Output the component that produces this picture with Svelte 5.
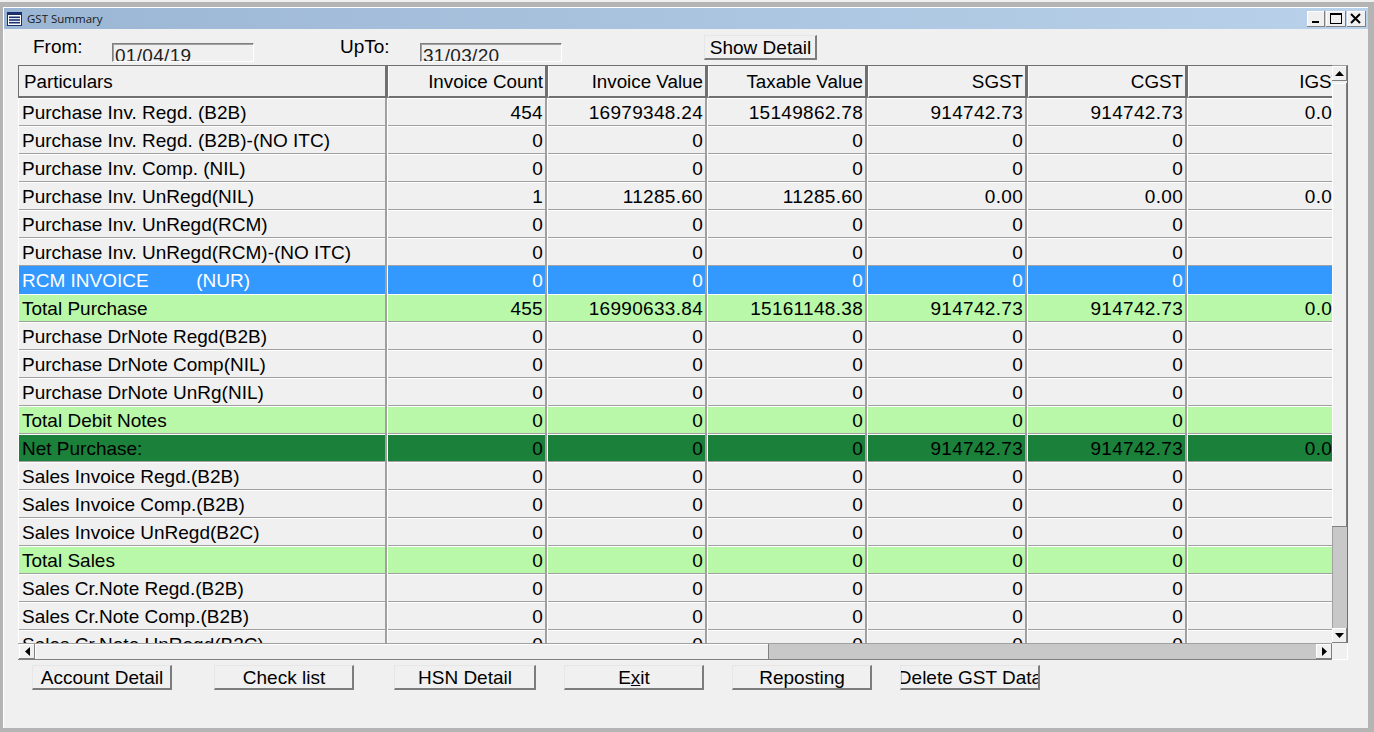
<script>
  const headers = ['Invoice Count', 'Invoice Value', 'Taxable Value', 'SGST', 'CGST', 'IGST'];
  const z = ['0', '0', '0', '0', '0', ''];
  const rows = [
    { name: 'Purchase Inv. Regd. (B2B)', v: ['454', '16979348.24', '15149862.78', '914742.73', '914742.73', '0.00'] },
    { name: 'Purchase Inv. Regd. (B2B)-(NO ITC)', v: z },
    { name: 'Purchase Inv. Comp. (NIL)', v: z },
    { name: 'Purchase Inv. UnRegd(NIL)', v: ['1', '11285.60', '11285.60', '0.00', '0.00', '0.00'] },
    { name: 'Purchase Inv. UnRegd(RCM)', v: z },
    { name: 'Purchase Inv. UnRegd(RCM)-(NO ITC)', v: z },
    { name: 'RCM INVOICE         (NUR)', v: z, kind: 'sel' },
    { name: 'Total Purchase', v: ['455', '16990633.84', '15161148.38', '914742.73', '914742.73', '0.00'], kind: 'total' },
    { name: 'Purchase DrNote Regd(B2B)', v: z },
    { name: 'Purchase DrNote Comp(NIL)', v: z },
    { name: 'Purchase DrNote UnRg(NIL)', v: z },
    { name: 'Total Debit Notes', v: z, kind: 'total' },
    { name: 'Net Purchase:', v: ['0', '0', '0', '914742.73', '914742.73', '0.00'], kind: 'net' },
    { name: 'Sales Invoice Regd.(B2B)', v: z },
    { name: 'Sales Invoice Comp.(B2B)', v: z },
    { name: 'Sales Invoice UnRegd(B2C)', v: z },
    { name: 'Total Sales', v: z, kind: 'total' },
    { name: 'Sales Cr.Note Regd.(B2B)', v: z },
    { name: 'Sales Cr.Note Comp.(B2B)', v: z },
    { name: 'Sales Cr.Note UnRegd(B2C)', v: z }
  ];
</script>

<div class="shell">
  <div class="window">
    <header class="title">
      <svg class="appicon" width="15" height="14" viewBox="0 0 15 14">
        <rect x="0.5" y="0.5" width="14" height="13" fill="#fff" stroke="#1c2f6e" />
        <rect x="0" y="0" width="15" height="3" fill="#1c2f6e" />
        <rect x="2" y="4.5" width="11" height="1.6" fill="#1c2f6e" />
        <rect x="2" y="7.2" width="11" height="1.6" fill="#1c2f6e" />
        <rect x="2" y="9.9" width="11" height="1.6" fill="#1c2f6e" />
      </svg>
      <span class="title-text">GST Summary</span>
      <div class="controls">
        <button class="ctl" aria-label="Minimize">
          <svg width="18" height="16" viewBox="0 0 18 16"><rect x="5" y="10" width="7" height="2" fill="#000" /></svg>
        </button>
        <button class="ctl wide" aria-label="Maximize">
          <svg width="18" height="16" viewBox="0 0 18 16"><rect x="3.5" y="2.5" width="11" height="10" fill="none" stroke="#000" /><rect x="3" y="2" width="12" height="2" fill="#000" /></svg>
        </button>
        <button class="ctl" aria-label="Close">
          <svg width="18" height="16" viewBox="0 0 18 16"><path d="M4 3 L13 12 M13 3 L4 12" stroke="#000" stroke-width="2" fill="none" /></svg>
        </button>
      </div>
    </header>

    <div class="toolbar">
      <span class="label from">From:</span>
      <div class="field first">01/04/19</div>
      <span class="label upto">UpTo:</span>
      <div class="field second">31/03/20</div>
      <button class="btn show">Show Detail</button>
    </div>

    <div class="gridwrap">
      <div class="viewport">
        <div class="hrow">
          <div class="hcell first-col">Particulars</div>
          {#each headers as h}
            <div class="hcell num">{h}</div>
          {/each}
        </div>
        {#each rows as r}
          <div class="row {r.kind ?? ''}">
            <div class="cell first-col"><span class="fill">{r.name}</span></div>
            {#each r.v as val}
              <div class="cell num"><span class="fill">{val}</span></div>
            {/each}
          </div>
        {/each}
      </div>

      <div class="vbar">
        <div class="sbtn"><svg width="9" height="5" viewBox="0 0 9 5"><path d="M4.5 0 L9 5 L0 5 Z" fill="#000" /></svg></div>
        <div class="vthumb"></div>
        <div class="vtrack"></div>
        <div class="sbtn"><svg width="9" height="5" viewBox="0 0 9 5"><path d="M0 0 L9 0 L4.5 5 Z" fill="#000" /></svg></div>
      </div>

      <div class="hbar">
        <div class="sbtn h"><svg width="5" height="9" viewBox="0 0 5 9"><path d="M5 0 L5 9 L0 4.5 Z" fill="#000" /></svg></div>
        <div class="hthumb"></div>
        <div class="htrack"></div>
        <div class="sbtn h"><svg width="5" height="9" viewBox="0 0 5 9"><path d="M0 0 L5 4.5 L0 9 Z" fill="#000" /></svg></div>
      </div>

      <div class="corner"></div>
    </div>

    <div class="actions">
      <button class="btn act">Account Detail</button>
      <button class="btn act g42">Check list</button>
      <button class="btn act g40 hsn">HSN Detail</button>
      <button class="btn act g28"><span>E<u>x</u>it</span></button>
      <button class="btn act g28">Reposting</button>
      <button class="btn act g28">Delete GST Data</button>
    </div>
  </div>
</div>

<style>
  :global(body) {
    margin: 0;
    background: #b4b4b4;
    font-family: "Liberation Sans", Arial, sans-serif;
  }
  .shell {
    width: 1374px;
    height: 732px;
    box-sizing: border-box;
    border-top: 2px solid #f0f0f0;
    padding: 5px 6px 4px 3px;
    overflow: hidden;
  }
  .window {
    height: 100%;
    box-sizing: border-box;
    background: #f0f0f0;
    border-top: 1px solid #fff;
    border-left: 1px solid #fff;
    display: flex;
    flex-direction: column;
    font-size: 19px;
    color: #000;
  }
  .title {
    height: 21px;
    flex: none;
    display: flex;
    align-items: center;
    padding-left: 3px;
    background: linear-gradient(to right, #9bb6d4, #b9d1ea);
  }
  .appicon { flex: none; }
  .title-text {
    margin-left: 5px;
    font-family: "Open Sans", sans-serif;
    font-size: 11.5px;
    color: #1a1a1a;
  }
  .controls {
    margin-left: auto;
    display: flex;
    gap: 1px;
    margin-right: 2px;
  }
  .ctl {
    width: 18px;
    height: 16px;
    padding: 0;
    border: none;
    background: #f0f0f0;
    box-shadow: inset -1px -1px 0 #808080, inset 1px 1px 0 #fff;
    display: flex;
  }
  .ctl.wide { width: 20px; justify-content: center; }
  .ctl:last-child { width: 19px; }

  .toolbar {
    height: 36px;
    flex: none;
    display: flex;
    align-items: flex-start;
  }
  .label { line-height: 20px; margin-top: 8px; }
  .from { margin-left: 29px; width: 79px; }
  .upto { margin-left: 86px; width: 80px; }
  .field {
    width: 142px;
    height: 19px;
    box-sizing: border-box;
    margin-top: 14px;
    padding-left: 2px;
    border-style: solid;
    border-width: 1px;
    border-color: #808080 #fff #fff #808080;
    box-shadow: inset 1px 1px 0 #a0a0a0;
    line-height: 23px;
    overflow: hidden;
    white-space: nowrap;
    color: #222;
    letter-spacing: 0.3px;
  }
  .btn {
    padding: 1px 0 0 1px;
    font: inherit;
    color: #000;
    background: #f0f0f0;
    border-style: solid;
    border-width: 1px 2px 2px 1px;
    border-color: #e6e6e6 #7c7c7c #7c7c7c #e6e6e6;
    overflow: hidden;
    white-space: nowrap;
    display: flex;
    align-items: center;
    justify-content: center;
  }
  .show {
    width: 113px;
    height: 25px;
    margin-left: 142px;
    margin-top: 6px;
  }

  .gridwrap {
    flex: none;
    margin-left: 14px;
    width: 1330px;
    display: grid;
    grid-template-columns: 1314px 16px;
    grid-template-rows: 578px 17px;
  }
  .viewport { overflow: hidden; background: #f0f0f0; }
  .hrow {
    display: flex;
    height: 33px;
    box-sizing: border-box;
    background: #f0f0f0;
    border-top: 1px solid #707070;
  }
  .hcell {
    flex: none;
    width: 160px;
    box-sizing: border-box;
    height: 32px;
    border-left: 1px solid #fff;
    border-right: 3px solid #707070;
    border-bottom: 2px solid #707070;
    box-shadow: 0 1px 0 #fff;
    font-size: 18.8px;
    line-height: 31px;
    white-space: nowrap;
    padding-right: 2px;
  }
  .hcell.first-col {
    width: 370px;
    border-left: 1px solid #707070;
    padding-left: 5px;
  }
  .num { text-align: right; }
  .row { display: flex; height: 28px; }
  .cell {
    flex: none;
    width: 160px;
    height: 28px;
    box-sizing: border-box;
    border-left: 1px solid #fff;
    border-right: 2px solid #a0a0a0;
    white-space: pre;
  }
  .cell.first-col { width: 369px; }
  .fill {
    display: block;
    box-sizing: border-box;
    height: 28px;
    line-height: 27px;
    border-top: 1px solid #fff;
    border-bottom: 1px solid #a0a0a0;
    padding-right: 2px;
  }
  .num .fill { letter-spacing: 0.3px; }
  .first-col .fill { padding-left: 3px; }
  .sel .fill {
    background: #3399ff;
    color: #fff;
    border-color: #3399ff;
  }
  .total .fill { background: #b8f8a8; }
  .net .fill { background: #1a803a; }

  .vbar {
    display: flex;
    flex-direction: column;
    border-right: 1px solid #707070;
    border-top: 1px solid #a0a0a0;
    box-sizing: border-box;
    background: #f0f0f0;
  }
  .sbtn {
    flex: none;
    height: 15px;
    width: 15px;
    box-sizing: border-box;
    background: #f0f0f0;
    display: flex;
    align-items: center;
    justify-content: center;
    box-shadow: inset -1px -1px 0 #808080, inset 1px 1px 0 #fff;
  }
  .sbtn.h { width: 16px; height: 16px; }
  .vthumb {
    flex: none;
    height: 444px;
    box-sizing: border-box;
    margin-top: 2px;
    background: #f0f0f0;
    box-shadow: inset -1px -1px 0 #808080, inset 1px 1px 0 #fff;
  }
  .vtrack { flex: 1; background: #c8c8c8; border-left: 1px solid #a0a0a0; }
  .hbar {
    display: flex;
    border-top: 1px solid #a0a0a0;
    border-bottom: 1px solid #808080;
    box-sizing: border-box;
    padding-left: 1px;
    background: #f0f0f0;
    height: 17px;
  }
  .hbar .sbtn { height: 15px; }
  .hthumb {
    flex: none;
    width: 734px;
    height: 15px;
    box-sizing: border-box;
    background: #f0f0f0;
    box-shadow: inset -1px 0 0 #808080, inset 1px 1px 0 #fff;
  }
  .htrack { flex: 1; background: #c8c8c8; }
  .corner {
    border-right: 1px solid #fff;
    border-bottom: 1px solid #fff;
  }

  .actions {
    display: flex;
    margin-top: 5px;
    padding-left: 28px;
  }
  .act { width: 140px; height: 25px; flex: none; }
  .hsn { width: 142px; }
  .g42 { margin-left: 42px; }
  .g40 { margin-left: 40px; }
  .g28 { margin-left: 28px; }
</style>
